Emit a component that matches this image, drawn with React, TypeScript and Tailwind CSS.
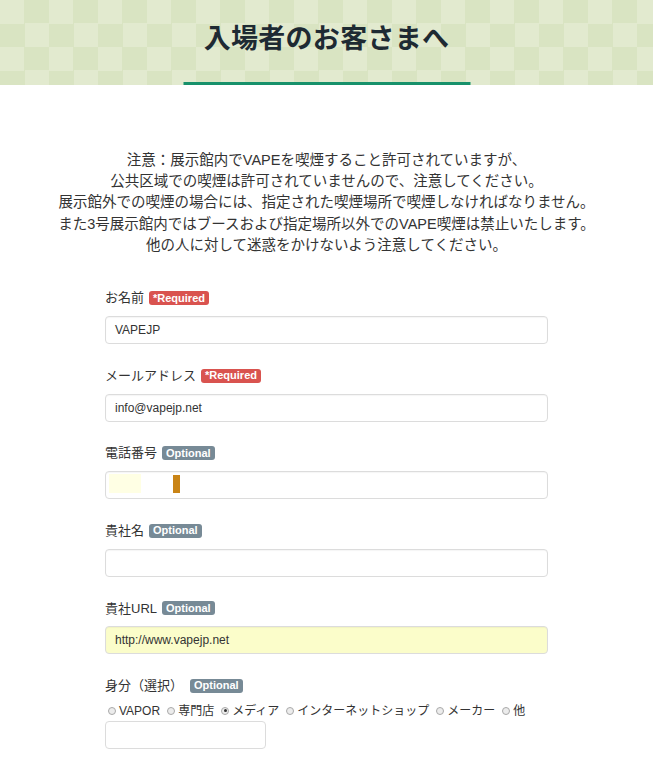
import React from "react";

const jp = "font-['Liberation_Sans','Noto_Sans_CJK_JP',sans-serif]";

type Field = {
  label: string;
  required?: boolean;
  value?: string;
  yellow?: boolean;
  masked?: boolean;
};

const fields: Field[] = [
  { label: "お名前", required: true, value: "VAPEJP" },
  { label: "メールアドレス", required: true, value: "info@vapejp.net" },
  { label: "電話番号", masked: true },
  { label: "貴社名" },
  { label: "貴社URL", value: "http://www.vapejp.net", yellow: true },
];

const roles = ["VAPOR", "専門店", "メディア", "インターネットショップ", "メーカー", "他"];

function Badge({ required }: { required?: boolean }) {
  return required ? (
    <span className="ml-[5px] inline-flex h-[14px] items-center rounded-[3px] bg-[#d9534f] px-[4px] text-[11px] font-bold leading-none text-white">
      *Required
    </span>
  ) : (
    <span className="ml-[5px] inline-flex h-[14px] items-center rounded-[3px] bg-[#778a96] px-[4px] text-[11px] font-bold leading-none text-white">
      Optional
    </span>
  );
}

function Input({ f }: { f: Field }) {
  return (
    <div
      className={`relative flex h-[28px] w-full items-center rounded-[4px] border border-[#dcdcdc] px-[9px] text-[12px] text-[#333] shadow-[inset_0_1px_1px_rgba(0,0,0,0.04)] ${
        f.yellow ? "bg-[#fbfdca]" : "bg-white"
      }`}
    >
      {f.value}
      {f.masked && (
        <>
          <div className="absolute left-[3px] top-[2px] h-[19px] w-[32px] bg-[#ffffe4]" />
          <div className="absolute left-[67px] top-[3px] h-[18px] w-[7px] bg-[#c98416]" />
        </>
      )}
    </div>
  );
}

export default function App() {
  return (
    <div className={`min-h-[768px] bg-white ${jp}`}>
      {/* Header */}
      <header className="relative flex h-[85px] justify-center bg-[repeating-conic-gradient(#d9e4c2_0_25%,#e2eacf_0_50%)] bg-[length:49px_47px]">
        <h1 className="mt-[24px] text-[27px] font-bold leading-[30px] tracking-[0.3px] text-[#1e2a33]">
          入場者のお客さまへ
        </h1>
        <div className="absolute bottom-0 left-1/2 h-[3px] w-[287px] -translate-x-1/2 bg-[#17916b]" />
      </header>

      {/* Notice */}
      <div className="mt-[65px] text-center text-[14.5px] leading-[21.2px] text-[#333]">
        <p>注意：展示館内でVAPEを喫煙すること許可されていますが、</p>
        <p>公共区域での喫煙は許可されていませんので、注意してください。</p>
        <p>展示館外での喫煙の場合には、指定された喫煙場所で喫煙しなければなりません。</p>
        <p>また3号展示館内ではブースおよび指定場所以外でのVAPE喫煙は禁止いたします。</p>
        <p>他の人に対して迷惑をかけないよう注意してください。</p>
      </div>

      {/* Form */}
      <form className="mx-auto mt-[32px] w-[443px]">
        {fields.map((f) => (
          <div key={f.label} className="mb-[21.6px]">
            <label className="mb-[8px] flex h-[20px] items-center text-[13px] text-[#333]">
              {f.label}
              <Badge required={f.required} />
            </label>
            <Input f={f} />
          </div>
        ))}

        <div>
          <label className="flex h-[20px] items-center text-[13px] text-[#333]">
            身分（選択）
            <span className="ml-[2px]" />
            <Badge />
          </label>
          <div className="mt-[7px] flex h-[16px] items-center whitespace-nowrap pl-[3px] text-[12px] text-[#333]">
            {roles.map((r) => (
              <span key={r} className="mr-[7px] flex shrink-0 items-center">
                <span className="mr-[3px] flex h-[8px] w-[8px] items-center justify-center rounded-full border border-[#a9a9a9] bg-[#ececec]">
                  {r === "メディア" && <span className="h-[3px] w-[3px] rounded-full bg-[#333]" />}
                </span>
                {r}
              </span>
            ))}
          </div>
          <div className="mt-[2px] h-[28px] w-[161px] rounded-[4px] border border-[#dcdcdc] bg-white" />
        </div>
      </form>
    </div>
  );
}
